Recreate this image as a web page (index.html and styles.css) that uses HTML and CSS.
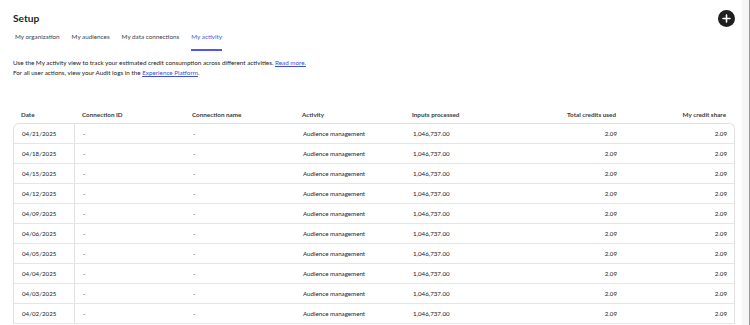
FILE: index.html
```html
<!DOCTYPE html>
<html lang="en">
<head>
    <meta charset="UTF-8">
    <meta name="viewport" content="width=device-width, initial-scale=1.0">
    <title>Setup - My activity</title>
    <link rel="stylesheet" href="styles.css">
</head>
<body>
    <div class="page">
        <main class="main">
            <header class="page-header">
                <h1 class="page-title">Setup</h1>
                <button class="add-btn" aria-label="Add">
                    <svg width="17" height="17" viewBox="0 0 17 17">
                        <circle cx="8.5" cy="8.5" r="8.5" fill="#1f1f1f"/>
                        <path d="M8.5 5v7M5 8.5h7" stroke="#fff" stroke-width="1.6" stroke-linecap="round"/>
                    </svg>
                </button>
            </header>

            <nav class="tabs">
                <a class="tab">My organization</a>
                <a class="tab">My audiences</a>
                <a class="tab">My data connections</a>
                <a class="tab active">My activity</a>
            </nav>

            <p class="intro">
                Use the My activity view to track your estimated credit consumption across different activities. <a href="#">Read more.</a><br>
                For all user actions, view your Audit logs in the <a href="#">Experience Platform</a>.
            </p>

            <div class="grid">
                <div class="grid-head">
                    <div class="cell">Date</div>
                    <div class="cell">Connection ID</div>
                    <div class="cell">Connection name</div>
                    <div class="cell">Activity</div>
                    <div class="cell">Inputs processed</div>
                    <div class="cell num">Total credits used</div>
                    <div class="cell num">My credit share</div>
                </div>
                <div class="grid-body">
                    <div class="row"><div class="cell first">04/21/2025</div><div class="cell">-</div><div class="cell">-</div><div class="cell">Audience management</div><div class="cell">1,046,737.00</div><div class="cell num">2.09</div><div class="cell num">2.09</div></div>
                    <div class="row"><div class="cell first">04/18/2025</div><div class="cell">-</div><div class="cell">-</div><div class="cell">Audience management</div><div class="cell">1,046,737.00</div><div class="cell num">2.09</div><div class="cell num">2.09</div></div>
                    <div class="row"><div class="cell first">04/15/2025</div><div class="cell">-</div><div class="cell">-</div><div class="cell">Audience management</div><div class="cell">1,046,737.00</div><div class="cell num">2.09</div><div class="cell num">2.09</div></div>
                    <div class="row"><div class="cell first">04/12/2025</div><div class="cell">-</div><div class="cell">-</div><div class="cell">Audience management</div><div class="cell">1,046,737.00</div><div class="cell num">2.09</div><div class="cell num">2.09</div></div>
                    <div class="row"><div class="cell first">04/09/2025</div><div class="cell">-</div><div class="cell">-</div><div class="cell">Audience management</div><div class="cell">1,046,737.00</div><div class="cell num">2.09</div><div class="cell num">2.09</div></div>
                    <div class="row"><div class="cell first">04/06/2025</div><div class="cell">-</div><div class="cell">-</div><div class="cell">Audience management</div><div class="cell">1,046,737.00</div><div class="cell num">2.09</div><div class="cell num">2.09</div></div>
                    <div class="row"><div class="cell first">04/05/2025</div><div class="cell">-</div><div class="cell">-</div><div class="cell">Audience management</div><div class="cell">1,046,737.00</div><div class="cell num">2.09</div><div class="cell num">2.09</div></div>
                    <div class="row"><div class="cell first">04/04/2025</div><div class="cell">-</div><div class="cell">-</div><div class="cell">Audience management</div><div class="cell">1,046,737.00</div><div class="cell num">2.09</div><div class="cell num">2.09</div></div>
                    <div class="row"><div class="cell first">04/03/2025</div><div class="cell">-</div><div class="cell">-</div><div class="cell">Audience management</div><div class="cell">1,046,737.00</div><div class="cell num">2.09</div><div class="cell num">2.09</div></div>
                    <div class="row"><div class="cell first">04/02/2025</div><div class="cell">-</div><div class="cell">-</div><div class="cell">Audience management</div><div class="cell">1,046,737.00</div><div class="cell num">2.09</div><div class="cell num">2.09</div></div>
                </div>
            </div>
        </main>
        <div class="scroll-track"></div>
    </div>
</body>
</html>
```

FILE: styles.css
```css
body {
    margin: 0;
    font-family: Lato, "Open Sans", sans-serif;
    color: #222;
    background: #fff;
    overflow: hidden;
}
.page {
    display: flex;
    height: 325px;
}
.main {
    width: 742px;
    padding: 0 7px 0 13px;
    box-sizing: border-box;
}
.scroll-track {
    width: 8px;
    background: #f6f6f6;
    border-right: 1px solid #9a9a9a;
    box-sizing: border-box;
}
.page-header {
    display: flex;
    justify-content: space-between;
    align-items: center;
    padding-top: 9px;
    height: 18px;
}
.page-title {
    margin: 0;
    font-size: 10.2px;
    font-weight: 700;
    color: #1f1f1f;
}
.add-btn {
    border: 0;
    padding: 0;
    background: none;
    display: flex;
}
.tabs {
    display: flex;
    gap: 12px;
    margin-top: 1px;
    padding-left: 2px;
}
.tab {
    font-size: 6.3px;
    line-height: 10px;
    color: #444;
    padding: 4px 0 7px;
    border-bottom: 2px solid transparent;
}
.tab.active {
    color: #5258e4;
    border-bottom-color: #5258e4;
}
.intro {
    margin: 7px 0 0;
    font-size: 6.3px;
    line-height: 10px;
    color: #222;
}
.intro a {
    color: #3d4fd6;
}
.grid {
    margin-top: 27px;
    width: 722px;
}
.grid-head,
.row {
    display: grid;
    grid-template-columns: 61px repeat(6, 110px);
}
.grid-head .cell {
    font-size: 6.3px;
    font-weight: 700;
    color: #3a3a3a;
    height: 16px;
    padding-top: 2px;
    line-height: 16px;
}
.grid-body {
    border: 1px solid #e1e1e1;
    border-bottom: 0;
    border-radius: 6px 6px 0 0;
}
.row {
    height: 20px;
    border-bottom: 1px solid #e6e6e6;
    box-sizing: border-box;
}
.row .cell {
    font-size: 6.2px;
    line-height: 19px;
    color: #222;
}
.cell {
    padding: 0 8px;
    white-space: nowrap;
}
.cell.first {
    border-right: 1px solid #e1e1e1;
}
.num {
    text-align: right;
}
```
